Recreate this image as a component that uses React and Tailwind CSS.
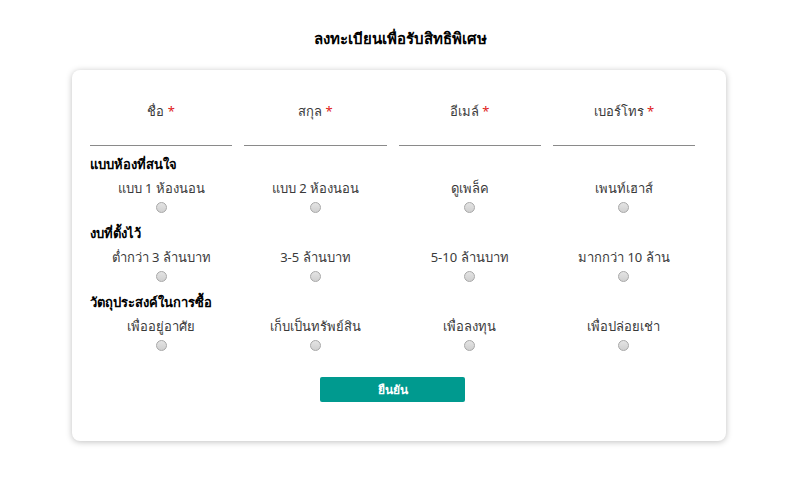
import React from 'react'

const fields = ['ชื่อ', 'สกุล', 'อีเมล์', 'เบอร์โทร']

const groups = [
  { title: 'แบบห้องที่สนใจ', options: ['แบบ 1 ห้องนอน', 'แบบ 2 ห้องนอน', 'ดูเพล็ค', 'เพนท์เฮาส์'] },
  { title: 'งบที่ตั้งไว้', options: ['ต่ำกว่า 3 ล้านบาท', '3-5 ล้านบาท', '5-10 ล้านบาท', 'มากกว่า 10 ล้าน'] },
  { title: 'วัตถุประสงค์ในการซื้อ', options: ['เพื่ออยู่อาศัย', 'เก็บเป็นทรัพย์สิน', 'เพื่อลงทุน', 'เพื่อปล่อยเช่า'] }
]

function Radio() {
  return (
    <span className="block w-[11px] h-[11px] rounded-full border border-[#a8a8a8] bg-gradient-to-b from-[#e4e4e4] to-[#d0d0d0]" />
  )
}

export default function App() {
  return (
    <div className="w-[800px] h-[487px] bg-white font-['Noto_Sans','Liberation_Sans',sans-serif] text-[#3a3a3a]">
      <h1 className="pt-[27px] text-center text-[15px] font-bold text-black leading-[22px]">
        ลงทะเบียนเพื่อรับสิทธิพิเศษ
      </h1>

      <div className="ml-[72px] w-[654px] mt-[21px] h-[371px] rounded-lg bg-white shadow-[0_1px_6px_rgba(0,0,0,0.25)] pl-[18px] pr-[31px] pt-[29px]">
        {/* Text fields */}
        <div className="grid grid-cols-4 gap-x-3">
          {fields.map((f) => (
            <div key={f} className="flex flex-col items-center">
              <label className="text-[13px] leading-[24px]">
                {f} <span className="text-[#e02020]">*</span>
              </label>
              <div className="mt-[22px] w-full h-[1px] bg-[#8a8a8a]" />
            </div>
          ))}
        </div>

        {/* Choice groups */}
        {groups.map((g, i) => (
          <div key={g.title} className={i === 0 ? 'mt-[8px]' : 'mt-[10px]'}>
            <h2 className="text-[13px] font-bold text-black leading-[20px]">{g.title}</h2>
            <div className="grid grid-cols-4 gap-x-3 mt-[4px]">
              {g.options.map((o) => (
                <div key={o} className="flex flex-col items-center">
                  <span className="text-[13px] leading-[20px]">{o}</span>
                  <span className="mt-[4px]">
                    <Radio />
                  </span>
                </div>
              ))}
            </div>
          </div>
        ))}

        <div className="flex justify-center mt-[26px]">
          <button className="w-[145px] h-[25px] bg-[#009a8f] text-white text-[12px] font-bold rounded-[2px]">
            ยืนยัน
          </button>
        </div>
      </div>
    </div>
  )
}
